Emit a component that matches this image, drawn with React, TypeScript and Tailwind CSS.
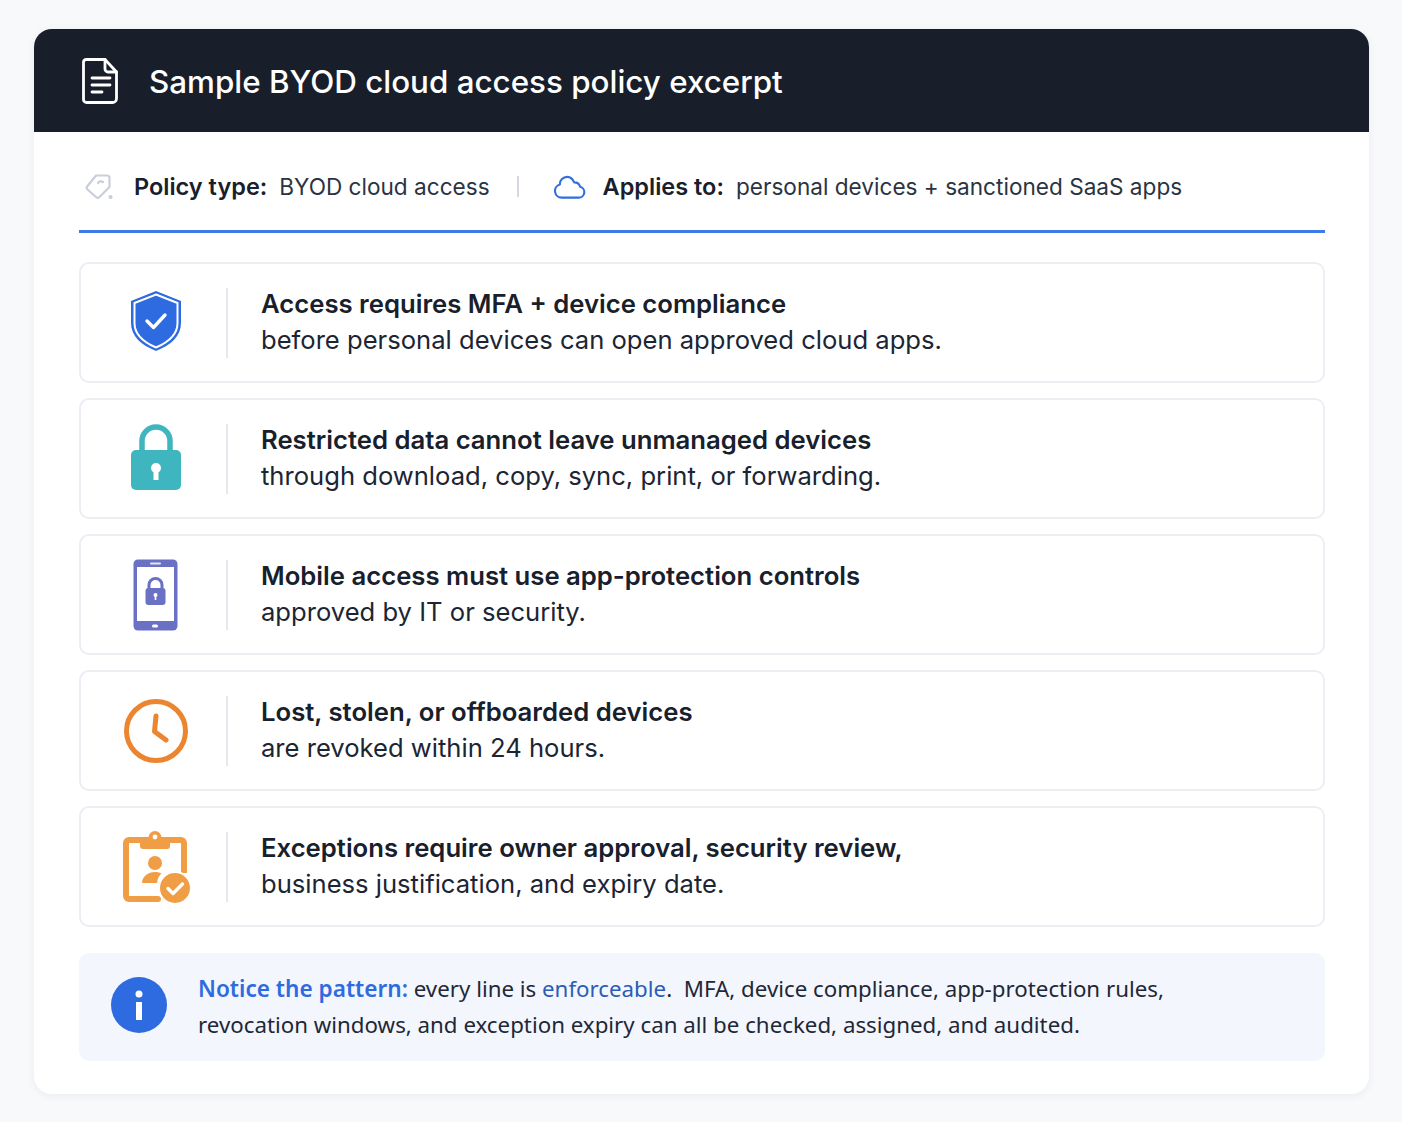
import type { ReactNode } from "react"

function DocIcon() {
  return (
    <svg width="36" height="46" viewBox="0 0 36 46" fill="none" stroke="#fff" strokeWidth="2.8" strokeLinejoin="round" strokeLinecap="round">
      <path d="M4.500 1.500h18.500l11.500 12.500v26.500a4 4 0 0 1-4 4h-26a3 3 0 0 1-3-3v-37.500a3 3 0 0 1 3-2.500z" />
      <path d="M23 1.500v9.500a3 3 0 0 0 3 3h8.500" />
      <path d="M10 20h18M10 27h18M10 34h10" />
    </svg>
  )
}

function TagIcon() {
  return (
    <svg width="30" height="28" viewBox="0 0 30 28" fill="none" stroke="#c9ced8" strokeWidth="2.200" strokeLinejoin="round" strokeLinecap="round">
      <path d="M12 2.500h11a2.500 2.500 0 0 1 2.500 2.500v9l-10 10a2.500 2.500 0 0 1-3.500 0l-8.500-7.500a2.500 2.500 0 0 1 0-3.500z" />
      <path d="M14 10a3.500 3.500 0 0 1 5-1" />
      <circle cx="26.500" cy="24" r="1" fill="#c9ced8" />
    </svg>
  )
}

function CloudIcon() {
  return (
    <svg width="32" height="24" viewBox="0 0 34 26" fill="none" stroke="#2f6fe0" strokeWidth="2.300" strokeLinejoin="round">
      <path d="M8 24.500h18.500a6 6 0 0 0 1.500-11.800 6.500 6.500 0 0 0-6.500-4.700c-1.500-3.500-4-6-7.500-6a8 8 0 0 0-8 8.200 7.300 7.300 0 0 0 2 14.300z" />
    </svg>
  )
}

function ShieldIcon() {
  return (
    <svg width="52" height="62" viewBox="0 0 52 62" fill="none" className="mb-[4px]">
      <path d="M26 1l25 10v22c0 13-10 22-25 28C11 55 1 46 1 33V11z" fill="#2f6be0" />
      <path d="M26 4.500l21.500 8.500v20c0 11-8.500 19-21.500 24.500-13-5.500-21.500-13.500-21.500-24.500V13z" fill="#2f6be0" stroke="#fff" strokeWidth="2" />
      <path d="M17 31l6.500 6.500L35 25" stroke="#fff" strokeWidth="3.400" strokeLinecap="round" strokeLinejoin="round" />
    </svg>
  )
}

function LockIcon() {
  return (
    <svg width="52" height="67" viewBox="0 0 52 67" fill="none" className="mb-[2px]">
      <path d="M12 28V17a14 14 0 0 1 28 0v11" stroke="#3fb5bf" strokeWidth="5.500" />
      <rect x="1" y="26" width="50" height="40" rx="5" fill="#3fb5bf" />
      <circle cx="26" cy="44" r="5" fill="#fff" />
      <rect x="23.500" y="45" width="5" height="11" fill="#fff" />
    </svg>
  )
}

function PhoneIcon() {
  return (
    <svg width="45" height="72" viewBox="0 0 45 72" fill="none">
      <rect x="0.500" y="0.500" width="44" height="71" rx="4.500" fill="#6a70c4" />
      <rect x="4" y="8" width="37" height="54" fill="#fff" />
      <rect x="17" y="3.500" width="11" height="2" rx="1" fill="#e4e5f4" />
      <rect x="19" y="65.500" width="6" height="3" rx="1.500" fill="#fff" />
      <path d="M16 30v-4a6.500 6.500 0 0 1 13 0v4" stroke="#6a70c4" strokeWidth="3" />
      <rect x="12.500" y="29" width="20" height="17" rx="3" fill="#6a70c4" />
      <circle cx="22.500" cy="36" r="2" fill="#fff" />
      <rect x="21.700" y="36" width="1.600" height="5" fill="#fff" />
    </svg>
  )
}

function ClockIcon() {
  return (
    <svg width="64" height="64" viewBox="0 0 64 64" fill="none" stroke="#ec8530" strokeLinecap="round" strokeLinejoin="round">
      <circle cx="32" cy="32" r="29.500" strokeWidth="5" />
      <path d="M32 17l-1.500 15.500L42 41" strokeWidth="5" />
    </svg>
  )
}

function ClipboardIcon() {
  return (
    <svg width="70" height="72" viewBox="-2 0 70 72" fill="none">
      <path d="M20 9H6a3 3 0 0 0-3 3v53a3 3 0 0 0 3 3h29" stroke="#f09e46" strokeWidth="6" strokeLinecap="round" />
      <path d="M45 9h13a3 3 0 0 1 3 3v30" stroke="#f09e46" strokeWidth="6" />
      <path d="M17 6h30v9a3 3 0 0 1-3 3H20a3 3 0 0 1-3-3z" fill="#f09e46" />
      <circle cx="32" cy="6.500" r="6.500" fill="#f09e46" />
      <circle cx="32" cy="6" r="2.400" fill="#fff" />
      <circle cx="32" cy="32" r="7" fill="#f09e46" />
      <path d="M19 52c.5-7 6-11 13-11 2.500 0 4.500 .5 6.500 1.500-2.500 2-4 5-4.500 9.500z" fill="#f09e46" />
      <circle cx="52" cy="57" r="17" fill="#fff" />
      <circle cx="52" cy="57" r="15" fill="#f09e46" />
      <path d="M45 57.500l5 5 9.500-9.500" stroke="#fff" strokeWidth="3.400" strokeLinecap="round" strokeLinejoin="round" />
    </svg>
  )
}

function PolicyRow({ icon, title, text }: { icon: ReactNode; title: string; text: string }) {
  return (
    <div className="flex h-[121px] items-center rounded-[10px] border-2 border-[#eceef4] bg-white">
      <div className="flex w-[145px] shrink-0 justify-center pl-[4px]">{icon}</div>
      <div className="h-[70px] w-[2px] shrink-0 bg-[#e6e8ee]" />
      <div className="pb-[2px] pl-[33px] text-[25.6px] leading-[36px] text-[#1c2533]">
        <div className="text-[25.7px] font-semibold text-[#18202c]">{title}</div>
        <div>{text}</div>
      </div>
    </div>
  )
}

const rows = [
  { icon: <ShieldIcon />, title: "Access requires MFA + device compliance", text: "before personal devices can open approved cloud apps." },
  { icon: <LockIcon />, title: "Restricted data cannot leave unmanaged devices", text: "through download, copy, sync, print, or forwarding." },
  { icon: <PhoneIcon />, title: "Mobile access must use app-protection controls", text: "approved by IT or security." },
  { icon: <ClockIcon />, title: "Lost, stolen, or offboarded devices", text: "are revoked within 24 hours." },
  { icon: <ClipboardIcon />, title: "Exceptions require owner approval, security review,", text: "business justification, and expiry date." },
]

export default function App() {
  return (
    <div className="min-h-[1122px] bg-[#f8f9fb] px-[34px] pt-[29px] font-['Inter',sans-serif]">
      <div className="h-[1065px] w-[1335px] overflow-hidden rounded-[18px] bg-white shadow-[0_2px_10px_rgba(30,40,70,0.06)]">
        <div className="flex h-[103px] items-center gap-[31px] bg-[#181f2b] pl-[48px]">
          <DocIcon />
          <h1 className="pt-[5px] text-[31.35px] font-medium text-white">Sample BYOD cloud access policy excerpt</h1>
        </div>
        <div className="pl-[45px] pr-[44px]">
          <div className="flex h-[101px] items-center border-b-[3px] border-[#3f7ae6] pl-[5px] pt-[11px] text-[22.6px] text-[#2a3342]">
            <TagIcon />
            <span className="ml-[20px] text-[23.5px] font-semibold text-[#18202c]">Policy type:</span>
            <span className="ml-[12px]">BYOD cloud access</span>
            <div className="ml-[27px] h-[21px] w-[2px] bg-[#d5d9e2]" />
            <div className="ml-[35px]"><CloudIcon /></div>
            <span className="ml-[17px] text-[23.5px] font-semibold text-[#18202c]">Applies to:</span>
            <span className="ml-[12px]">personal devices + sanctioned SaaS apps</span>
          </div>
          <div className="mt-[29px] flex flex-col gap-[15px]">
            {rows.map((r) => (
              <PolicyRow key={r.title} icon={r.icon} title={r.title} text={r.text} />
            ))}
          </div>
          <div className="mt-[26px] flex h-[108px] items-center gap-[31px] rounded-[10px] bg-[#f3f6fd] pl-[32px] font-['Noto_Sans',sans-serif] text-[22.3px] leading-[36px] text-[#1f2836]">
            <svg width="56" height="56" viewBox="0 0 56 56" className="mb-[4px] shrink-0">
              <circle cx="28" cy="28" r="28" fill="#2f6be0" />
              <circle cx="28" cy="17" r="3.500" fill="#fff" />
              <rect x="25" y="25" width="6" height="18" fill="#fff" />
            </svg>
            <p>
              <span className="text-[22.6px] font-semibold text-[#2f6be0]">Notice the pattern:</span> every line is{" "}
              <span className="text-[#2b5cb8]">enforceable</span>.&nbsp; MFA, device compliance, app-protection rules,
              <br />
              revocation windows, and exception expiry can all be checked, assigned, and audited.
            </p>
          </div>
        </div>
      </div>
    </div>
  )
}
